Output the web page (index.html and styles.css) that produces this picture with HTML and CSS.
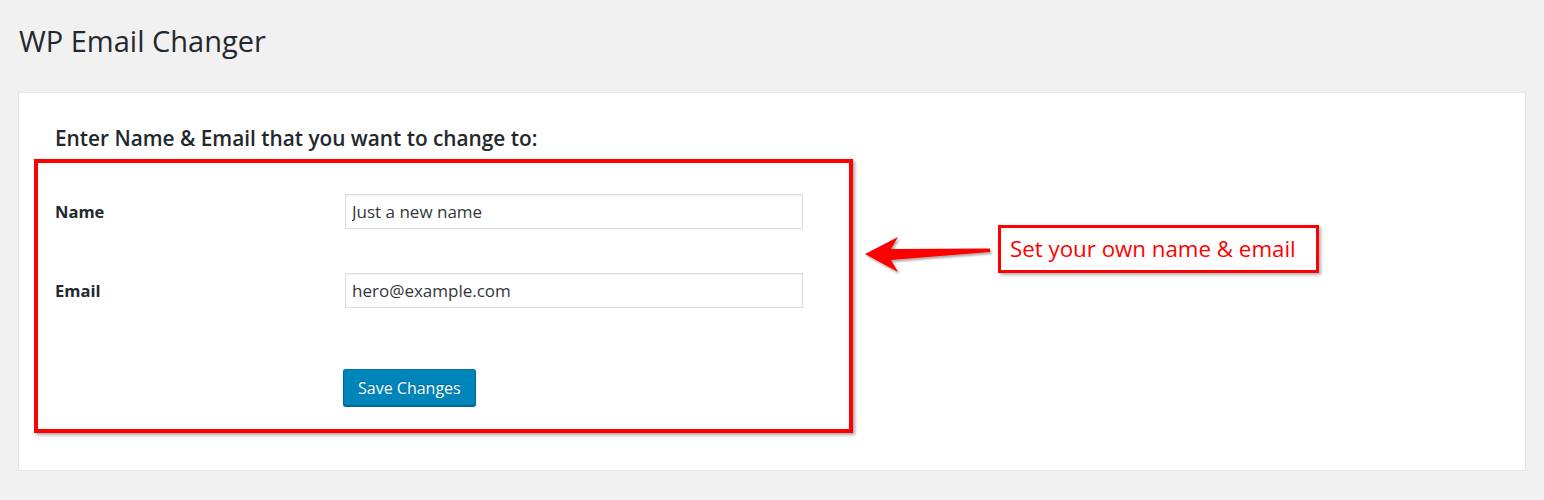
FILE: index.html
```html
<!DOCTYPE html>
<html lang="en">
<head>
<meta charset="utf-8">
<title>WP Email Changer</title>
<link rel="stylesheet" href="styles.css">
</head>
<body>
<div class="wrap">
  <h1 class="page-title">WP Email Changer</h1>
  <div class="panel">
    <h2 class="section-title">Enter Name &amp; Email that you want to change to:</h2>
    <form class="form-box">
      <div class="row">
        <label class="label" for="name">Name</label>
        <input class="field" id="name" type="text" value="Just a new name">
      </div>
      <div class="row">
        <label class="label" for="email">Email</label>
        <input class="field" id="email" type="text" value="hero@example.com">
      </div>
      <div class="row submit-row">
        <span class="label"></span>
        <button class="button" type="button">Save Changes</button>
      </div>
    </form>
    <svg class="arrow" width="132" height="42" viewBox="0 0 132 42">
      <defs>
        <filter id="sh" x="-10%" y="-20%" width="130%" height="160%">
          <feDropShadow dx="1.5" dy="2" stdDeviation="1.2" flood-color="#000" flood-opacity="0.35"/>
        </filter>
      </defs>
      <path d="M3,20 L36,3 L29,15 L128,14.5 L128,18 L29,26 L36,38 Z" fill="#ff0000" filter="url(#sh)"/>
    </svg>
    <div class="callout">Set your own name &amp; email</div>
  </div>
</div>
</body>
</html>
```

FILE: styles.css
```css
html, body {
  margin: 0;
  padding: 0;
  background: #f1f1f1;
  font-family: "Open Sans", "Liberation Sans", sans-serif;
  color: #23282d;
}

.wrap {
  padding: 23px 18px 0 18px;
}

.page-title {
  margin: 0 0 33px 1px;
  font-size: 29px;
  line-height: 36px;
  font-weight: 400;
  color: #23282d;
}

.panel {
  position: relative;
  background: #fff;
  border: 1px solid #e5e5e5;
  box-shadow: 0 1px 1px rgba(0, 0, 0, 0.04);
  height: 379px;
  box-sizing: border-box;
  padding: 31px 0 0 15px;
}

.section-title {
  margin: 0 0 7px 21px;
  font-size: 20.8px;
  line-height: 28px;
  font-weight: 600;
  color: #23282d;
}

.form-box {
  width: 819px;
  box-sizing: border-box;
  border: 4px solid #ff0000;
  box-shadow: 2px 2px 3px rgba(0, 0, 0, 0.35);
  padding: 31px 0 23px 17px;
  display: flex;
  flex-direction: column;
  gap: 44px;
}

.row {
  display: flex;
  align-items: center;
}

.submit-row {
  margin-top: 17px;
}

.label {
  width: 290px;
  flex: none;
  font-size: 16.5px;
  font-weight: 700;
  color: #23282d;
}

.field {
  width: 458px;
  height: 35px;
  box-sizing: border-box;
  margin: 0;
  padding: 0 6px;
  border: 1px solid #dddddd;
  box-shadow: inset 0 1px 2px rgba(0, 0, 0, 0.07);
  background: #fff;
  font-family: "Open Sans", "Liberation Sans", sans-serif;
  font-size: 17px;
  color: #32373c;
  outline: none;
}

.button {
  margin: 0 0 0 -2px;
  height: 37px;
  padding: 0 14px;
  background: #0085ba;
  border: 1px solid #0073aa;
  border-color: #0073aa #006799 #006799;
  border-radius: 3px;
  box-shadow: 0 1px 0 #006799;
  color: #fff;
  font-family: "Open Sans", "Liberation Sans", sans-serif;
  font-size: 16px;
  text-shadow: 0 -1px 1px #006799;
  cursor: pointer;
}

.arrow {
  position: absolute;
  left: 843px;
  top: 141px;
}

.callout {
  position: absolute;
  left: 979px;
  top: 132px;
  width: 321px;
  height: 48px;
  box-sizing: border-box;
  border: 3px solid #ff0000;
  box-shadow: 2px 2px 3px rgba(0, 0, 0, 0.3);
  background: #fff;
  color: #ff0000;
  font-size: 22.3px;
  line-height: 42px;
  padding-left: 9px;
  white-space: nowrap;
}
```
